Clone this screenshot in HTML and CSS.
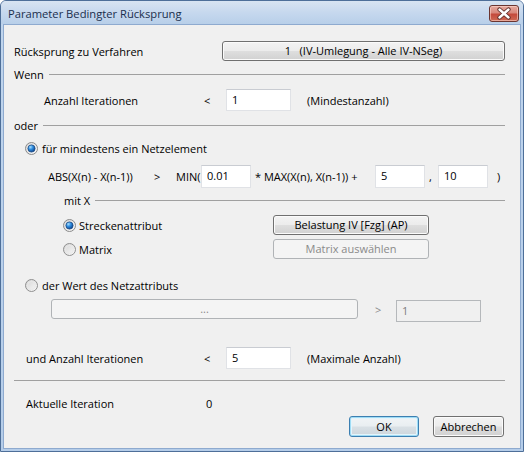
FILE: index.html
```html
<!DOCTYPE html>
<html lang="de">
<head>
<meta charset="utf-8">
<title>Parameter Bedingter Rücksprung</title>
<link rel="stylesheet" href="styles.css">
</head>
<body>
<div class="window">
  <div class="titlebar">
    <span class="title">Parameter Bedingter Rücksprung</span>
    <span class="close">
      <svg width="30" height="17" viewBox="0 0 30 17">
        <path d="M10.5 4.5 L19.5 12.5 M19.5 4.5 L10.5 12.5" stroke="#5b2a26" stroke-width="4.2" stroke-linecap="round" fill="none"/>
        <path d="M10.5 4.5 L19.5 12.5 M19.5 4.5 L10.5 12.5" stroke="#ffffff" stroke-width="2.4" stroke-linecap="round" fill="none"/>
      </svg>
    </span>
  </div>
  <div class="content">
    <div class="row row-verf">
      <span class="col-verf">Rücksprung zu Verfahren</span>
      <button class="btn btn-verf">1&nbsp;&nbsp;&nbsp;(IV-Umlegung - Alle IV-NSeg)</button>
    </div>

    <div class="row group group-wenn">
      <span>Wenn</span><span class="line"></span>
    </div>

    <div class="row row-min">
      <span class="col-anz">Anzahl Iterationen</span>
      <span class="col-lt">&lt;</span>
      <input class="field field-iter" type="text" value="1">
      <span class="note">(Mindestanzahl)</span>
    </div>

    <div class="row group group-oder">
      <span>oder</span><span class="line"></span>
    </div>

    <div class="row row-radio1">
      <svg class="radio" width="13" height="13" viewBox="0 0 13 13">
        <defs>
          <linearGradient id="rb1" x1="0" y1="0" x2="1" y2="1"><stop offset="0" stop-color="#d6d6d6"/><stop offset="1" stop-color="#fbfbfb"/></linearGradient>
          <radialGradient id="rd1" cx="0.35" cy="0.3" r="0.75"><stop offset="0" stop-color="#a8e0ff"/><stop offset="0.45" stop-color="#2f8de0"/><stop offset="1" stop-color="#0c3f86"/></radialGradient>
        </defs>
        <circle cx="6.5" cy="6.5" r="6" fill="url(#rb1)" stroke="#8a8a8a" stroke-width="1"/>
        <circle cx="6.5" cy="6.5" r="3.6" fill="url(#rd1)" stroke="#1d4c86" stroke-width="0.8"/>
      </svg>
      <span class="rlabel">für mindestens ein Netzelement</span>
    </div>

    <div class="row row-abs">
      <span class="col-abs">ABS(X(n) - X(n-1))</span>
      <span class="col-gt">&gt;</span>
      <span class="col-min">MIN(</span>
      <input class="field field-small" type="text" value="0.01">
      <span class="col-max">* MAX(X(n), X(n-1)) +</span>
      <input class="field field-small" type="text" value="5">
      <span class="col-comma">,</span>
      <input class="field field-small" type="text" value="10">
      <span class="col-close">)</span>
    </div>

    <div class="row group group-mit">
      <span>mit X</span><span class="line"></span>
    </div>

    <div class="row row-strecke">
      <span class="col-opt">
        <svg class="radio" width="13" height="13" viewBox="0 0 13 13">
          <defs>
            <linearGradient id="rb2" x1="0" y1="0" x2="1" y2="1"><stop offset="0" stop-color="#d6d6d6"/><stop offset="1" stop-color="#fbfbfb"/></linearGradient>
            <radialGradient id="rd2" cx="0.35" cy="0.3" r="0.75"><stop offset="0" stop-color="#a8e0ff"/><stop offset="0.45" stop-color="#2f8de0"/><stop offset="1" stop-color="#0c3f86"/></radialGradient>
          </defs>
          <circle cx="6.5" cy="6.5" r="6" fill="url(#rb2)" stroke="#8a8a8a" stroke-width="1"/>
          <circle cx="6.5" cy="6.5" r="3.6" fill="url(#rd2)" stroke="#1d4c86" stroke-width="0.8"/>
        </svg>
        <span class="olabel">Streckenattribut</span>
      </span>
      <button class="btn btn-attr">Belastung IV [Fzg] (AP)</button>
    </div>

    <div class="row row-matrix">
      <span class="col-opt">
        <svg class="radio" width="13" height="13" viewBox="0 0 13 13">
          <defs>
            <linearGradient id="rb3" x1="0" y1="0" x2="1" y2="1"><stop offset="0" stop-color="#d3d3d3"/><stop offset="1" stop-color="#fbfbfb"/></linearGradient>
          </defs>
          <circle cx="6.5" cy="6.5" r="6" fill="url(#rb3)" stroke="#8f8f8f" stroke-width="1"/>
          <circle cx="6.5" cy="6.5" r="4" fill="none" stroke="#e9e9e9" stroke-width="1"/>
        </svg>
        <span class="olabel">Matrix</span>
      </span>
      <button class="btn btn-attr" disabled>Matrix auswählen</button>
    </div>

    <div class="row row-radio2">
      <svg class="radio" width="13" height="13" viewBox="0 0 13 13">
        <defs>
          <linearGradient id="rb4" x1="0" y1="0" x2="1" y2="1"><stop offset="0" stop-color="#d3d3d3"/><stop offset="1" stop-color="#fbfbfb"/></linearGradient>
        </defs>
        <circle cx="6.5" cy="6.5" r="6" fill="url(#rb4)" stroke="#8f8f8f" stroke-width="1"/>
        <circle cx="6.5" cy="6.5" r="4" fill="none" stroke="#e9e9e9" stroke-width="1"/>
      </svg>
      <span class="rlabel">der Wert des Netzattributs</span>
    </div>

    <div class="row row-netz">
      <button class="btn btn-netz" disabled>...</button>
      <span class="col-gt2">&gt;</span>
      <input class="field field-dis" type="text" value="1" disabled>
    </div>

    <div class="row row-max">
      <span class="col-anz2">und Anzahl Iterationen</span>
      <span class="col-lt">&lt;</span>
      <input class="field field-iter" type="text" value="5">
      <span class="note">(Maximale Anzahl)</span>
    </div>

    <div class="sep"></div>

    <div class="row row-akt">
      <span class="col-akt">Aktuelle Iteration</span>
      <span>0</span>
    </div>

    <div class="row row-buttons">
      <button class="btn btn-ok">OK</button>
      <button class="btn btn-cancel">Abbrechen</button>
    </div>
  </div>
</div>
</body>
</html>
```

FILE: styles.css
```css
* { box-sizing: border-box; }
html, body { margin: 0; padding: 0; }
body {
  width: 524px;
  height: 452px;
  overflow: hidden;
  background: #ffffff;
  font-family: "Open Sans", "Noto Sans", sans-serif;
  font-size: 11px;
  color: #000;
}
.window {
  width: 524px;
  height: 452px;
  border: 1px solid #4e6f99;
  border-radius: 6px 6px 0 0;
  background: linear-gradient(#c0d5ed, #b5cde9);
  padding: 0 2px 2px 2px;
  display: flex;
  flex-direction: column;
}
.titlebar {
  height: 23px;
  flex: none;
  display: flex;
  align-items: center;
  justify-content: space-between;
  background: linear-gradient(#d8e4f2, #c6d8ee 50%, #b8cfe9);
  margin: 0 -2px;
  padding-left: 7px;
  padding-right: 4px;
  border-radius: 5px 5px 0 0;
}
.title {
  font-size: 11.2px;
  color: #1a2f4d;
  padding-top: 1px;
}
.close {
  width: 30px;
  height: 17px;
  border: 1px solid #6b3530;
  border-radius: 3px;
  background: linear-gradient(#e6a99f, #d8887c 45%, #c44a3c 55%, #cf6a55);
  box-shadow: inset 0 0 0 1px rgba(255, 220, 210, 0.55);
  display: flex;
  align-items: center;
  justify-content: center;
  margin-top: 1px;
}
.close svg { display: block; margin: -1px; }
.content {
  flex: 1;
  background: #f0f0f0;
  border: 1px solid #8eaacf;
  padding: 0 15px 0 10px;
  display: flex;
  flex-direction: column;
}
.row {
  display: flex;
  align-items: center;
  flex: none;
  white-space: nowrap;
}
.group { height: 14px; }
.group .line { flex: 1; height: 1px; background: #a0a0a0; margin-left: 5px; }
.btn {
  font: inherit;
  color: #000;
  height: 20px;
  padding: 0;
  border: 1px solid #707070;
  border-radius: 3px;
  background: linear-gradient(#f3f3f3, #ececec 48%, #dedede 52%, #d1d1d1);
  box-shadow: inset 0 0 0 1px #fbfbfb;
  text-align: center;
  line-height: 16px;
}
.btn:disabled {
  color: #8a8a8a;
  border-color: #b0b3b6;
  background: #f4f4f4;
  box-shadow: none;
}
.field {
  font: inherit;
  color: #000;
  height: 22px;
  border: 1px solid #e0e2e6;
  border-top-color: #c9ccd2;
  background: #ffffff;
  padding: 0 0 2px 5px;
  outline: none;
}
.field:disabled {
  background: #f0f0f0;
  border: 1px solid #b5b8bb;
  color: #7d7d7d;
}

.row-verf { margin-top: 16px; height: 20px; }
.col-verf { width: 208px; }
.btn-verf { flex: 1; }

.group-wenn { margin-top: 6px; }

.row-min { margin-top: 8px; height: 22px; padding-left: 30px; }
.col-anz { width: 160px; }
.col-lt { width: 22px; }
.field-iter { width: 65px; }
.note { margin-left: 16px; }

.group-oder { margin-top: 7px; }

.row-radio1 { margin-top: 9px; height: 14px; padding-left: 11px; }
.radio { display: block; flex: none; }
.rlabel { margin-left: 4px; }

.row-abs { margin-top: 10px; height: 23px; padding-left: 34px; }
.col-abs { width: 106px; }
.col-gt { width: 22px; }
.col-min { width: 25px; }
.field-small { width: 50px; height: 23px; }
.col-max { width: 120px; margin-left: 4px; }
.col-comma { width: 9px; margin-left: 4px; }
.col-close { margin-left: 9px; }

.group-mit { margin-top: 5px; padding-left: 50px; }

.row-strecke { margin-top: 8px; height: 20px; padding-left: 49px; }
.row-matrix { margin-top: 4px; height: 20px; padding-left: 49px; }
.col-opt { width: 210px; display: flex; align-items: center; }
.olabel { margin-left: 3px; }
.btn-attr { width: 156px; }

.row-radio2 { margin-top: 19px; height: 14px; padding-left: 11px; }

.row-netz { margin-top: 7px; height: 23px; padding-left: 37px; align-items: flex-start; }
.btn-netz { width: 307px; line-height: 14px; }
.col-gt2 { width: 21px; margin-left: 17px; color: #8a8a8a; line-height: 22px; }
.field-dis { width: 85px; margin-top: 1px; }

.row-max { margin-top: 25px; height: 22px; padding-left: 12px; }
.col-anz2 { width: 178px; }

.sep { margin-top: 11px; height: 1px; background: #a0a0a0; flex: none; }

.row-akt { margin-top: 15px; height: 14px; padding-left: 12px; }
.col-akt { width: 180px; }

.row-buttons { margin-top: 6px; height: 21px; justify-content: flex-end; padding-right: 1px; }
.btn-ok {
  width: 70px;
  height: 21px;
  margin-right: 14px;
  border-color: #3c7fb1;
  box-shadow: inset 0 0 0 1px #9fdcf5, inset 0 0 0 2px #e4f4fb;
  background: linear-gradient(#f1f4f6, #e9eef1 48%, #d9e0e5 52%, #cdd6dc);
}
.btn-cancel { width: 71px; height: 21px; }
```
